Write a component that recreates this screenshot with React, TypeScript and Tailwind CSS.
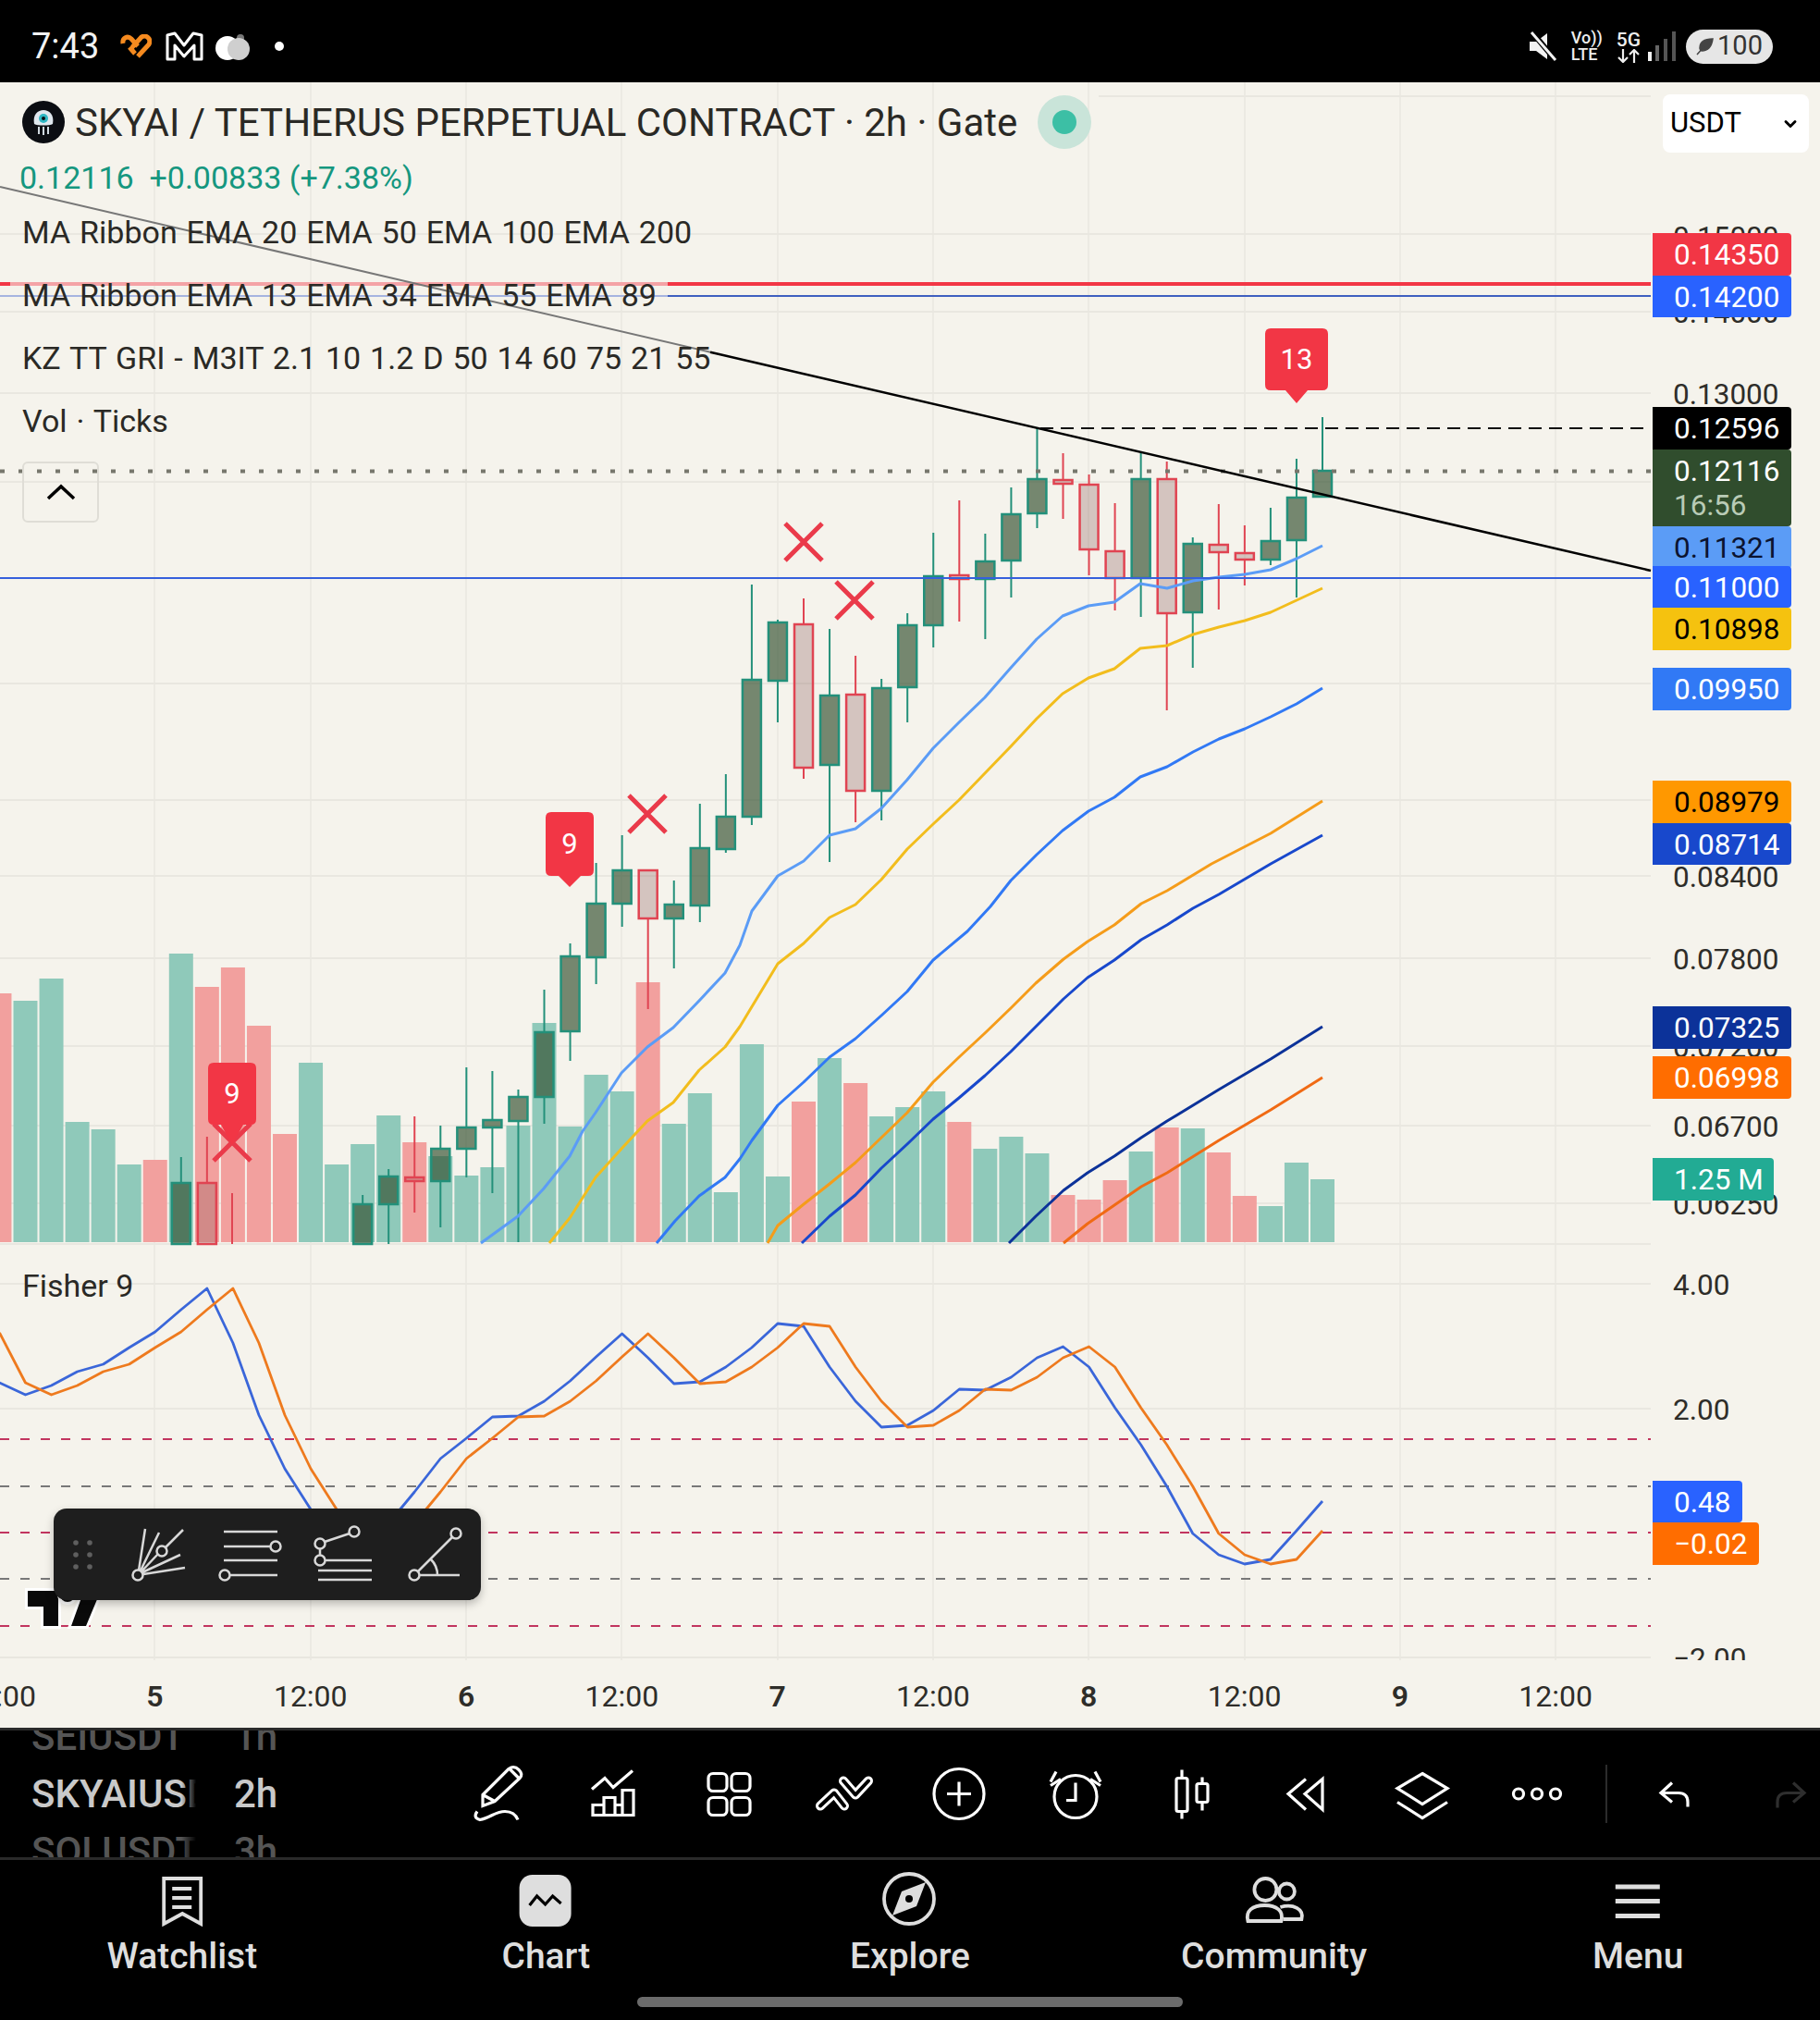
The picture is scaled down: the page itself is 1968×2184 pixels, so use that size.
import { ReactNode } from "react";
import { ChevronDown } from "lucide-react";

// candle x from index counted back from the last bar
const xi = (i: number) => 1430 - 28.05 * i;

// [index, high, bodyTop, bodyBottom, low, isUp]
const candles: [number, number, number, number, number, boolean][] = [
  [0, 451, 509, 537, 537, true],
  [1, 496, 538, 584, 646, true],
  [2, 549, 585, 605, 611, true],
  [3, 568, 598, 605, 633, false],
  [4, 545, 589, 597, 659, false],
  [5, 581, 588, 662, 722, true],
  [6, 499, 518, 663, 768, false],
  [7, 490, 518, 625, 667, true],
  [8, 544, 596, 625, 660, false],
  [9, 513, 524, 594, 622, false],
  [10, 490, 519, 523, 561, false],
  [11, 463, 518, 555, 571, true],
  [12, 527, 556, 606, 646, true],
  [13, 577, 607, 626, 691, true],
  [14, 541, 622, 626, 672, false],
  [15, 576, 623, 676, 700, true],
  [16, 663, 676, 743, 781, true],
  [17, 734, 744, 855, 887, true],
  [18, 709, 751, 855, 889, false],
  [19, 680, 752, 827, 932, true],
  [20, 647, 675, 830, 842, false],
  [21, 670, 673, 736, 781, true],
  [22, 632, 735, 883, 892, true],
  [23, 837, 883, 918, 922, true],
  [24, 869, 917, 979, 997, true],
  [25, 952, 978, 993, 1047, true],
  [26, 940, 941, 993, 1091, false],
  [27, 903, 941, 977, 1002, true],
  [28, 933, 977, 1035, 1064, true],
  [29, 1020, 1034, 1115, 1147, true],
  [30, 1070, 1116, 1186, 1215, true],
  [31, 1178, 1186, 1212, 1343, true],
  [32, 1158, 1211, 1219, 1290, true],
  [33, 1154, 1219, 1242, 1273, true],
  [34, 1217, 1242, 1277, 1327, true],
  [35, 1207, 1273, 1277, 1311, false],
  [36, 1264, 1272, 1302, 1345, true],
  [37, 1292, 1302, 1345, 1345, true],
  [43, 1229, 1279, 1345, 1345, false],
  [44, 1251, 1279, 1345, 1345, true],
];

// [index, top, isUp]
const volume: [number, number, boolean][] = [
  [51, 1074, false], [50, 1082, true], [49, 1058, true], [48, 1213, true], [47, 1221, true], [46, 1259, true],
  [45, 1254, false], [44, 1031, true], [43, 1067, false], [42, 1046, false], [41, 1109, false], [40, 1226, false],
  [39, 1149, true], [38, 1259, true], [37, 1237, true], [36, 1206, true], [35, 1235, false], [34, 1250, true],
  [33, 1271, true], [32, 1262, true], [31, 1217, true], [30, 1106, true], [29, 1218, true], [28, 1162, true],
  [27, 1180, true], [26, 1062, false], [25, 1215, true], [24, 1182, true], [23, 1289, true], [22, 1129, true],
  [21, 1272, true], [20, 1191, false], [19, 1144, true], [18, 1171, false], [17, 1207, true], [16, 1197, true],
  [15, 1180, true], [14, 1213, false], [13, 1242, true], [12, 1229, true], [11, 1247, true], [10, 1292, false],
  [9, 1297, false], [8, 1276, false], [7, 1245, true], [6, 1219, false], [5, 1220, true], [4, 1246, false],
  [3, 1293, false], [2, 1304, true], [1, 1257, true], [0, 1275, true],
];

const ema13 = "1430,590 1402,604 1374,616 1346,621 1318,624 1290,628 1262,636 1233,631 1205,651 1177,655 1149,666 1121,691 1093,722 1065,754 1037,781 1009,809 981,843 953,874 925,896 897,903 869,931 841,947 813,985 800,1022 784,1052 756,1082 728,1111 700,1132 672,1160 644,1203 630,1223 616,1250 588,1285 560,1315 520,1344";
const ema34 = "1430,636 1402,649 1374,662 1346,671 1318,678 1290,686 1262,698 1233,701 1205,723 1177,733 1149,750 1121,777 1093,807 1065,836 1037,865 1009,891 981,918 953,951 925,978 897,992 869,1020 841,1042 800,1110 784,1132 756,1157 728,1192 700,1212 672,1242 644,1273 616,1317 594,1344";
const ema55 = "1430,744 1402,761 1374,775 1346,788 1318,799 1290,813 1262,829 1233,840 1205,862 1177,877 1149,898 1121,924 1093,952 1071,980 1046,1007 1009,1038 981,1072 953,1098 925,1123 897,1143 869,1170 841,1195 813,1233 800,1253 784,1273 756,1293 730,1320 710,1344";
const ema89 = "1430,866 1374,901 1310,934 1262,963 1234,977 1205,1000 1176,1018 1150,1037 1120,1063 1093,1090 1065,1117 1037,1143 1009,1170 981,1203 953,1230 925,1257 897,1280 869,1302 841,1325 830,1344";
const ema144 = "1430,903 1374,934 1318,967 1290,982 1262,1000 1234,1016 1205,1038 1176,1057 1150,1080 1120,1110 1093,1137 1065,1163 1037,1187 1009,1210 981,1237 953,1263 925,1292 897,1315 867,1344";
const ema200 = "1430,1110 1374,1145 1318,1178 1262,1212 1234,1230 1205,1250 1176,1268 1150,1287 1120,1315 1091,1344";
const ema233 = "1430,1165 1374,1200 1318,1233 1262,1268 1234,1283 1205,1303 1176,1323 1150,1344";

// fisher values, pixel rows, oldest first (index 52 down to 0)
const fisher = [1441, 1495, 1508, 1498, 1483, 1475, 1457, 1440, 1416, 1393, 1452, 1530, 1588, 1632, 1677, 1673, 1647, 1613, 1577, 1555, 1532, 1531, 1515, 1493, 1467, 1442, 1468, 1496, 1494, 1478, 1457, 1431, 1434, 1478, 1515, 1543, 1541, 1525, 1502, 1503, 1489, 1468, 1456, 1478, 1522, 1562, 1607, 1658, 1681, 1691, 1686, 1655, 1623];
const fisherBlue = fisher.slice(1).map((y, k) => `${xi(51 - k)},${y}`).join(" ");
const fisherOrange = fisher.slice(0, -1).map((y, k) => `${xi(51 - k)},${y}`).join(" ");

const vGrid = [167, 336, 504, 672, 841, 1009, 1177, 1346, 1514, 1682];
const hGrid = [253, 337, 425, 521, 739, 865, 947, 1036, 1131, 1217, 1301, 1345, 1388, 1523, 1792];

const crosses: [number, number][] = [[869, 586], [924, 649], [700, 880], [251, 1235]];

const axisLabels = [
  { text: "0.15000", pos: "top-[146px]" },
  { text: "0.14000", pos: "top-[228px]" },
  { text: "0.13000", pos: "top-[316px]" },
  { text: "0.08400", pos: "top-[838px]" },
  { text: "0.07800", pos: "top-[927px]" },
  { text: "0.07200", pos: "top-[1022px]" },
  { text: "0.06700", pos: "top-[1108px]" },
  { text: "0.06250", pos: "top-[1192px]" },
  { text: "4.00", pos: "top-[1279px]" },
  { text: "2.00", pos: "top-[1414px]" },
  { text: "−2.00", pos: "top-[1683px]" },
];

const priceTags = [
  { text: "0.14350", cls: "top-[163px] h-[46px] w-[150px] bg-[#f23645] text-white" },
  { text: "0.14200", cls: "top-[209px] h-[45px] w-[150px] bg-[#2962ff] text-white" },
  { text: "0.12596", cls: "top-[351px] h-[46px] w-[150px] bg-black text-white" },
  { text: "0.11321", cls: "top-[480px] h-[46px] w-[150px] bg-[#5b9cf6] text-[#0b1330]" },
  { text: "0.11000", cls: "top-[523px] h-[45px] w-[150px] bg-[#2962ff] text-white" },
  { text: "0.10898", cls: "top-[568px] h-[46px] w-[150px] bg-[#f5c20f] text-black" },
  { text: "0.09950", cls: "top-[633px] h-[46px] w-[150px] bg-[#3179f5] text-white" },
  { text: "0.08979", cls: "top-[755px] h-[46px] w-[150px] bg-[#ff9800] text-black" },
  { text: "0.08714", cls: "top-[801px] h-[45px] w-[150px] bg-[#1848cc] text-white" },
  { text: "0.07325", cls: "top-[999px] h-[46px] w-[150px] bg-[#0c3299] text-white" },
  { text: "0.06998", cls: "top-[1053px] h-[46px] w-[150px] bg-[#ff6d00] text-white" },
  { text: "1.25 M", cls: "top-[1163px] h-[46px] w-[131px] bg-[#22ab94] text-white" },
  { text: "0.48", cls: "top-[1512px] h-[45px] w-[97px] bg-[#2962ff] text-white" },
  { text: "−0.02", cls: "top-[1557px] h-[46px] w-[115px] bg-[#ff6d00] text-white" },
];

const timeLabels: [string, boolean][] = [
  ["12:00", false], ["5", true], ["12:00", false], ["6", true], ["12:00", false], ["7", true],
  ["12:00", false], ["8", true], ["12:00", false], ["9", true], ["12:00", false],
];

const legendRows = [
  "MA Ribbon EMA 20 EMA 50 EMA 100 EMA 200",
  "MA Ribbon EMA 13 EMA 34 EMA 55 EMA 89",
  "KZ TT GRI - M3IT 2.1 10 1.2 D 50 14 60 75 21 55",
  "Vol · Ticks",
];

function Callout({ x, top, bottom, tip, w }: { x: number; top: number; bottom: number; tip: number; w: number }) {
  const l = x - w / 2;
  const r = x + w / 2;
  return (
    <path
      d={`M${l + 6} ${top} H${r - 6} Q${r} ${top} ${r} ${top + 6} V${bottom - 6} Q${r} ${bottom} ${r - 6} ${bottom} H${x + 12} L${x} ${tip} L${x - 12} ${bottom} H${l + 6} Q${l} ${bottom} ${l} ${bottom - 6} V${top + 6} Q${l} ${top} ${l + 6} ${top} Z`}
      fill="#f23645"
    />
  );
}

function ChartDrawing() {
  return (
    <svg viewBox="0 89 1968 1706" width={1968} height={1706} className="absolute inset-0">
      {vGrid.map((x) => (
        <line key={x} x1={x} x2={x} y1={89} y2={1795} stroke="#e9e7e0" strokeWidth={1.5} />
      ))}
      {hGrid.map((y) => (
        <line key={y} x1={0} x2={1785} y1={y} y2={y} stroke="#e9e7e0" strokeWidth={2} />
      ))}
      <line x1={1188} x2={1785} y1={104} y2={104} stroke="#e9e7e0" strokeWidth={2} />

      {volume.map(([i, top, up]) => (
        <rect key={i} x={xi(i) - 13} y={top} width={26} height={1343 - top} fill={up ? "#8fc9ba" : "#f2a09e"} />
      ))}

      {candles.map(([i, high, top, bot, low, up]) => {
        const c = up ? "#23907a" : "#e04452";
        return (
          <g key={i}>
            <line x1={xi(i)} x2={xi(i)} y1={high} y2={top} stroke={c} strokeWidth={2} />
            <line x1={xi(i)} x2={xi(i)} y1={bot} y2={low} stroke={c} strokeWidth={2} />
            <rect
              x={xi(i) - 10}
              y={top}
              width={20}
              height={bot - top}
              fill={up ? "#304d2d" : "#875a56"}
              fillOpacity={up ? 0.65 : 0.3}
              stroke={c}
              strokeWidth={2.5}
            />
          </g>
        );
      })}
      <line x1={251} x2={251} y1={1290} y2={1345} stroke="#e04452" strokeWidth={2} />

      <g fill="none" strokeWidth={3} strokeLinejoin="round">
        <polyline points={ema13} stroke="#5b9cf6" />
        <polyline points={ema34} stroke="#f2bd1d" />
        <polyline points={ema55} stroke="#3179f5" />
        <polyline points={ema89} stroke="#f59c1a" />
        <polyline points={ema144} stroke="#1848cc" />
        <polyline points={ema200} stroke="#0c3299" />
        <polyline points={ema233} stroke="#f06a14" />
      </g>

      {/* levels, washed out where the legend sits on them */}
      <line x1={0} x2={11} y1={307} y2={307} stroke="#f23645" strokeWidth={4} />
      <line x1={11} x2={722} y1={307} y2={307} stroke="#f4a3a6" strokeWidth={4} />
      <line x1={722} x2={1785} y1={307} y2={307} stroke="#f23645" strokeWidth={4} />
      <line x1={0} x2={722} y1={320} y2={320} stroke="#a6b4e0" strokeWidth={2} />
      <line x1={722} x2={1785} y1={320} y2={320} stroke="#3f5fc0" strokeWidth={2} />
      <line x1={0} x2={1785} y1={625} y2={625} stroke="#3560dc" strokeWidth={2} />
      <line x1={0} x2={1785} y1={509.5} y2={509.5} stroke="#77776d" strokeWidth={4} strokeDasharray="5 15" />
      <line x1={1125} x2={1785} y1={463} y2={463} stroke="#111" strokeWidth={2} strokeDasharray="14 8" />
      <line x1={0} x2={768} y1={202} y2={380.7} stroke="#777" strokeWidth={2} />
      <line x1={768} x2={1785} y1={380.7} y2={617} stroke="#000" strokeWidth={2.5} />

      {crosses.map(([x, y]) => (
        <path key={x} d={`M${x - 20} ${y - 20} L${x + 20} ${y + 20} M${x + 20} ${y - 20} L${x - 20} ${y + 20}`} stroke="#ea3a4a" strokeWidth={5} />
      ))}
      <Callout x={1402} top={355} bottom={422} tip={436} w={68} />
      <Callout x={616} top={878} bottom={947} tip={959} w={52} />
      <Callout x={251} top={1149} bottom={1216} tip={1238} w={52} />

      <g strokeWidth={2} strokeDasharray="10 12">
        <line x1={0} x2={1785} y1={1556} y2={1556} stroke="#c2355f" />
        <line x1={0} x2={1785} y1={1607} y2={1607} stroke="#787878" />
        <line x1={0} x2={1785} y1={1657} y2={1657} stroke="#c2355f" />
        <line x1={0} x2={1785} y1={1707} y2={1707} stroke="#787878" />
        <line x1={0} x2={1785} y1={1758} y2={1758} stroke="#c2355f" />
      </g>
      <polyline points={fisherBlue} fill="none" stroke="#3a66d9" strokeWidth={2.8} strokeLinejoin="round" />
      <polyline points={fisherOrange} fill="none" stroke="#ee7a1e" strokeWidth={2.8} strokeLinejoin="round" />

      {/* watermark, mostly under the tool strip */}
      <g fill="#0a0a0a" stroke="#fff" strokeWidth={6} paintOrder="stroke">
        <path d="M30 1720 H63 V1758 H47 V1737 H30 Z M108 1722 L93 1758 H77 L90 1722 Z" />
        <circle cx={73} cy={1724} r={8} />
      </g>
    </svg>
  );
}

function DrawingTools() {
  const s = { fill: "none", stroke: "#d8d8d8", strokeWidth: 2.5 };
  return (
    <div className="absolute left-[58px] top-[1542px] w-[462px] h-[99px] rounded-[14px] bg-[#1e1e1e] shadow-[0_4px_10px_rgba(0,0,0,0.25)] flex">
      <svg viewBox="0 0 62 99" width={62} height={99}>
        {[24, 39].map((x) => [37, 50, 63].map((y) => <circle key={`${x}${y}`} cx={x} cy={y} r={2.8} fill="#5f5f5f" />))}
      </svg>
      <svg viewBox="62 0 98 99" width={98} height={99} {...s}>
        <circle cx={91} cy={72} r={5.5} />
        <path d="M92 67 L99 22 M94 67 L114 26 M95 68 L113 49 M121 42 L140 23 M96 69 L137 50 M97 71 L142 64" />
        <circle cx={117} cy={46} r={5.5} />
      </svg>
      <svg viewBox="160 0 110 99" width={110} height={99} {...s}>
        <path d="M184 25 H242 M184 41 H235 M184 56 H242 M190 72 H242" />
        <circle cx={240} cy={41} r={5.5} />
        <circle cx={185} cy={72} r={5.5} />
      </svg>
      <svg viewBox="270 0 100 99" width={100} height={99} {...s}>
        <circle cx={288} cy={38} r={5.5} />
        <circle cx={325} cy={25} r={5.5} />
        <circle cx={288} cy={56} r={5.5} />
        <path d="M293 36 L320 27 M288 44 V51 M294 56 H344 M286 67 H344 M286 77 H344" />
      </svg>
      <svg viewBox="370 0 92 99" width={92} height={99} {...s}>
        <circle cx={390} cy={72} r={5.5} />
        <circle cx={435} cy={27} r={5.5} />
        <path d="M394 68 L431 31 M396 72 H439 M408 55 Q415 62 415 72" />
      </svg>
    </div>
  );
}

function ChartPane() {
  return (
    <div className="relative h-[1706px] overflow-hidden">
      <ChartDrawing />

      {/* legend block */}
      <div className="absolute left-0 top-0 flex flex-col pl-[24px] text-[#2a2925]">
        <div className="h-[86px] flex items-center">
          <svg viewBox="0 0 46 46" width={46} height={46}>
            <circle cx={23} cy={23} r={23} fill="#0b0d12" />
            <path d="M13 25 C11 15 17 10 23 10 C29 10 35 15 33 25 C30 27 16 27 13 25 Z" fill="#dfe7ee" />
            <circle cx={23} cy={19} r={5} fill="#2fb7c4" />
            <circle cx={23} cy={19} r={2} fill="#0b0d12" />
            <path d="M18 28 V36 M23 28 V37 M28 28 V36" stroke="#cfd8df" strokeWidth={2} />
          </svg>
          <span className="ml-[11px] text-[42px] whitespace-nowrap">SKYAI / TETHERUS PERPETUAL CONTRACT · 2h · Gate</span>
          <span className="ml-[22px] w-[58px] h-[58px] rounded-full bg-[#c9e4d9] flex items-center justify-center">
            <span className="w-[26px] h-[26px] rounded-full bg-[#3cbfa5]" />
          </span>
        </div>
        <div className="h-[34px] flex items-center -ml-[3px] text-[34px] text-[#15977f] whitespace-pre">0.12116  +0.00833 (+7.38%)</div>
        <div className="mt-[8px] flex flex-col">
          {legendRows.map((row) => (
            <div key={row} className="h-[68px] flex items-center text-[34px] [word-spacing:1.5px] whitespace-nowrap">{row}</div>
          ))}
        </div>
        <button className="mt-[10px] w-[83px] h-[66px] rounded-[6px] border-2 border-[#dfddd6] flex items-center justify-center">
          <svg viewBox="0 0 32 18" width={32} height={18} fill="none" stroke="#000" strokeWidth={3.5}>
            <path d="M2 16 L16 3 L30 16" />
          </svg>
        </button>
      </div>

      <div className="absolute left-[24px] top-[1281px] h-[40px] flex items-center text-[34px] text-[#2a2925]">Fisher 9</div>

      <div className="absolute left-[1798px] top-[13px] w-[158px] h-[63px] rounded-[8px] bg-white flex items-center justify-between pl-[8px] pr-[10px] text-[31px] text-black">
        USDT
        <ChevronDown size={20} strokeWidth={3.5} />
      </div>

      {axisLabels.map((a) => (
        <div key={a.text} className={`absolute left-[1809px] h-[40px] flex items-center pt-[3px] text-[31.5px] text-[#2e2d29] ${a.pos}`}>{a.text}</div>
      ))}
      {priceTags.map((t) => (
        <div key={t.text} className={`absolute left-[1787px] rounded-r-[4px] flex items-center pl-[23px] pt-[2px] text-[31.5px] ${t.cls}`}>{t.text}</div>
      ))}
      <div className="absolute left-[1787px] top-[397px] w-[150px] h-[83px] rounded-r-[4px] bg-[#304d2d] flex flex-col justify-center pl-[23px] pt-[1px] text-[31.5px] leading-[37px]">
        <span className="text-white">0.12116</span>
        <span className="text-[#b9cbb6]">16:56</span>
      </div>

      <div className="absolute left-[1368px] top-[266px] w-[68px] h-[67px] pt-[2px] flex items-center justify-center text-[31px] text-white">13</div>
      <div className="absolute left-[590px] top-[789px] w-[52px] h-[69px] pt-[2px] flex items-center justify-center text-[31px] text-white">9</div>
      <div className="absolute left-[225px] top-[1060px] w-[52px] h-[67px] pt-[2px] flex items-center justify-center text-[31px] text-white">9</div>

      <DrawingTools />
    </div>
  );
}

function TimeAxis() {
  return (
    <div className="h-[73px] flex items-center pt-[4px] -ml-[85px] text-[32px] text-[#2e2d29]">
      {timeLabels.map(([text, bold], k) => (
        <div key={k} className={`w-[168.3px] shrink-0 text-center ${bold ? "font-semibold" : ""}`}>{text}</div>
      ))}
    </div>
  );
}

function StatusBar() {
  return (
    <div className="h-[89px] bg-black flex items-center justify-between pl-[34px] pr-[51px] pt-[11px] text-white">
      <div className="flex items-center">
        <span className="text-[38px] w-[96px] leading-none text-[#f2f2f2]">7:43</span>
        <svg viewBox="0 0 34 27" width={34} height={27} fill="none" stroke="#f58a1f" strokeWidth={5}>
          <path d="M3 10 C2 4 8 1 12 5 L19 13 M10 14 L16 21 M19 24 L31 11 C34 5 28 0 23 3 L13 14" />
        </svg>
        <svg viewBox="0 0 41 32" width={41} height={32} fill="none" stroke="#fff" strokeWidth={3} className="ml-[15px]">
          <path d="M2 4 L10 2 L20 15 L30 2 L39 4 V30 H31 V15 L20 27 L10 15 V30 H2 Z" strokeLinejoin="round" />
        </svg>
        <svg viewBox="0 0 40 30" width={40} height={30} className="ml-[12px]">
          <circle cx={28} cy={6} r={4} fill="#777" />
          <circle cx={14} cy={17} r={13} fill="#fff" />
          <circle cx={26} cy={18} r={12} fill="#cfcfcf" />
        </svg>
        <span className="ml-[25px] w-[10px] h-[10px] rounded-full bg-white" />
      </div>
      <div className="flex items-center">
        <svg viewBox="0 0 34 32" width={34} height={32}>
          <path d="M3 11 H10 L22 2 V30 L10 21 H3 Z" fill="#f2f2f2" />
          <path d="M5 0 L31 31" stroke="#000" strokeWidth={6} />
          <path d="M5 1 L31 31" stroke="#f2f2f2" strokeWidth={3} />
        </svg>
        <div className="ml-[14px] flex flex-col text-[18px] leading-[18px] font-medium text-[#eee]">
          <span>Vo))</span>
          <span>LTE</span>
        </div>
        <div className="ml-[15px] flex flex-col items-center text-[#eee]">
          <span className="text-[21px] leading-[20px] font-medium">5G</span>
          <svg viewBox="0 0 24 15" width={24} height={15} fill="none" stroke="#eee" strokeWidth={2.2}>
            <path d="M6 0 V14 M1 9 L6 14 L11 9 M18 15 V1 M13 6 L18 1 L23 6" />
          </svg>
        </div>
        <svg viewBox="0 0 30 32" width={30} height={32} className="ml-[8px]">
          <rect x={0} y={22} width={4} height={10} fill="#f2f2f2" />
          <rect x={8} y={15} width={4} height={17} fill="#666" />
          <rect x={17} y={8} width={4} height={24} fill="#555" />
          <rect x={26} y={0} width={4} height={32} fill="#555" />
        </svg>
        <div className="ml-[11px] w-[94px] h-[37px] rounded-full bg-[#e6e6e6] flex items-center justify-center gap-[3px] text-[#333] text-[29px]">
          <svg viewBox="0 0 20 20" width={20} height={20}>
            <path d="M18 2 C10 2 4 5 4 12 C4 13 5 15 6 15 C13 15 17 10 18 2 Z M1 19 L9 10" fill="#444" stroke="#444" strokeWidth={1.5} />
          </svg>
          100
        </div>
      </div>
    </div>
  );
}

function ToolIcon({ cx, w = "w-[125px]", stroke = "#fff", children }: { cx: number; w?: string; stroke?: string; children: ReactNode }) {
  return (
    <div className={`${w} shrink-0 flex justify-center`}>
      <svg viewBox={`${cx - 34} 1905.5 68 68`} width={68} height={68} fill="none" stroke={stroke} strokeWidth={3.2}>
        {children}
      </svg>
    </div>
  );
}

function Toolbar() {
  return (
    <div className="h-[140px] border-t-[3px] border-[#2a2a2a] bg-black flex items-center">
      <div className="w-[475px] shrink-0 h-[137px] overflow-hidden flex items-center pl-[34px]">
        <div className="relative w-[178px] overflow-hidden flex flex-col text-[42px] font-medium whitespace-nowrap">
          <div className="h-[62px] leading-[62px] text-[#555]">SEIUSDT</div>
          <div className="h-[62px] leading-[62px] text-[#c9c9c9]">SKYAIUSDT</div>
          <div className="h-[62px] leading-[62px] text-[#555]">SOLUSDT</div>
          <div className="absolute right-0 inset-y-0 w-[16px] bg-gradient-to-r from-transparent to-black" />
        </div>
        <div className="ml-[41px] flex flex-col text-[42px] font-medium">
          <div className="h-[62px] leading-[62px] text-[#555]">1h</div>
          <div className="h-[62px] leading-[62px] text-[#c9c9c9]">2h</div>
          <div className="h-[62px] leading-[62px] text-[#555]">3h</div>
        </div>
      </div>

      <ToolIcon cx={538}>
        <path d="M522 1940 L550 1912 Q556 1908 561 1913 Q566 1918 562 1922 L535 1947 L522 1952 Z M522 1940 L535 1947 M551 1912 L562 1923" />
        <path d="M516 1958 Q511 1965 519 1967 C530 1965 536 1958 546 1958 C554 1958 558 1962 560 1967" />
      </ToolIcon>
      <ToolIcon cx={663}>
        <path d="M640 1934 L654 1922 L663 1932 L684 1914" />
        <path d="M641 1962 V1951 H653 V1943 H665 V1951 H673 V1935 H685 V1962 Z M653 1951 V1962 M665 1951 V1962 M673 1951 V1962" />
      </ToolIcon>
      <ToolIcon cx={788}>
        <rect x={766} y={1917} width={20} height={19} rx={5} />
        <rect x={791} y={1917} width={20} height={19} rx={5} />
        <rect x={766} y={1943} width={20} height={19} rx={5} />
        <rect x={791} y={1943} width={20} height={19} rx={5} />
      </ToolIcon>
      <ToolIcon cx={913}>
        <g strokeLinecap="round" strokeLinejoin="round">
          <polyline points="887,1952 902,1938 913,1952" strokeWidth={10} />
          <polyline points="912,1925 925,1940 939,1925" strokeWidth={10} />
          <polyline points="887,1952 902,1938 913,1952" strokeWidth={4} stroke="#000" />
          <polyline points="912,1925 925,1940 939,1925" strokeWidth={4} stroke="#000" />
        </g>
      </ToolIcon>
      <ToolIcon cx={1038}>
        <circle cx={1037} cy={1939} r={27} />
        <path d="M1037 1926 V1952 M1024 1939 H1050" />
      </ToolIcon>
      <ToolIcon cx={1163}>
        <circle cx={1163} cy={1942} r={23} />
        <path d="M1163 1927 V1946 H1153 M1147 1923 L1136 1930 M1179 1923 L1190 1930 M1142 1915 L1136 1926 M1184 1915 L1190 1926" />
      </ToolIcon>
      <ToolIcon cx={1288}>
        <rect x={1272} y={1922} width={12} height={36} rx={2} />
        <path d="M1278 1913 V1922 M1278 1958 V1966 M1300 1921 V1928 M1300 1948 V1957" />
        <rect x={1294} y={1928} width={12} height={20} rx={2} />
      </ToolIcon>
      <ToolIcon cx={1413}>
        <path d="M1412 1923 L1393 1939 L1412 1956 M1430 1923 L1411 1939 L1430 1956 Z" />
      </ToolIcon>
      <ToolIcon cx={1538}>
        <path d="M1538 1917 L1565 1933 L1538 1950 L1511 1933 Z M1511 1948 L1538 1965 L1565 1948" />
      </ToolIcon>
      <ToolIcon cx={1663}>
        <circle cx={1642} cy={1939} r={5.5} />
        <circle cx={1662} cy={1939} r={5.5} />
        <circle cx={1682} cy={1939} r={5.5} />
      </ToolIcon>
      <div className="ml-[11px] w-[2px] h-[63px] bg-[#2c2c2c] shrink-0" />
      <ToolIcon cx={1810} w="ml-[9px] w-[126px]">
        <path d="M1808 1927 L1796 1938 L1808 1948 M1796 1938 H1815 Q1825 1938 1825 1948 V1953" />
      </ToolIcon>
      <ToolIcon cx={1937} w="w-[128px]" stroke="#2e2e2e">
        <path d="M1939 1927 L1951 1938 L1939 1948 M1951 1938 H1932 Q1922 1938 1922 1948 V1954" />
      </ToolIcon>
    </div>
  );
}

function NavIcon({ cx, children }: { cx: number; children: ReactNode }) {
  return (
    <svg viewBox={`${cx - 40} 2024 80 62`} width={80} height={62} fill="none" stroke="#dedede" strokeWidth={3.8}>
      {children}
    </svg>
  );
}

function BottomNav() {
  const items: [string, number, ReactNode][] = [
    ["Watchlist", 196.8, <path d="M177 2031 H217 V2080 L197 2069 L177 2080 Z M186 2042 H207 M186 2052 H207 M186 2062 H207" />],
    [
      "Chart",
      590.4,
      <>
        <rect x={562} y={2027} width={56} height={56} rx={14} fill="#dedede" stroke="none" />
        <path d="M573 2060 L581 2050 L590 2059 L598 2050 L607 2058" stroke="#000" strokeWidth={3.2} />
      </>,
    ],
    [
      "Explore",
      984,
      <>
        <circle cx={983} cy={2053} r={27} />
        <path d="M1001 2035 L991 2061 L965 2071 L975 2045 Z" fill="#dedede" stroke="none" />
        <circle cx={983} cy={2053} r={4} fill="#000" stroke="none" />
      </>,
    ],
    [
      "Community",
      1377.6,
      <>
        <circle cx={1368} cy={2043} r={12} />
        <circle cx={1391} cy={2045} r={8.5} />
        <path d="M1349 2077 C1346 2066 1354 2060 1367 2060 C1380 2060 1388 2066 1385 2077 Z" />
        <path d="M1384 2062 C1398 2058 1410 2064 1407 2075 H1387" />
      </>,
    ],
    ["Menu", 1771.2, <path d="M1747 2040 H1795 M1747 2055.5 H1795 M1747 2071.5 H1795" strokeWidth={5} />],
  ];
  return (
    <div className="flex-1 border-t-[3px] border-[#2a2a2a] bg-black flex flex-col items-center">
      <div className="w-full grid grid-cols-5 pt-[13px]">
        {items.map(([label, cx, icon]) => (
          <div key={label} className="flex flex-col items-center">
            <NavIcon cx={cx}>{icon}</NavIcon>
            <span className="mt-[6px] h-[46px] leading-[46px] text-[39px] font-medium text-[#dedede]">{label}</span>
          </div>
        ))}
      </div>
      <div className="mt-[21px] w-[590px] h-[11px] rounded-full bg-[#6b6b6b]" />
    </div>
  );
}

export default function App() {
  return (
    <div className="w-[1968px] h-[2184px] flex flex-col overflow-hidden bg-[#f5f3ec] font-[Roboto,sans-serif]">
      <StatusBar />
      <ChartPane />
      <TimeAxis />
      <Toolbar />
      <BottomNav />
    </div>
  );
}
